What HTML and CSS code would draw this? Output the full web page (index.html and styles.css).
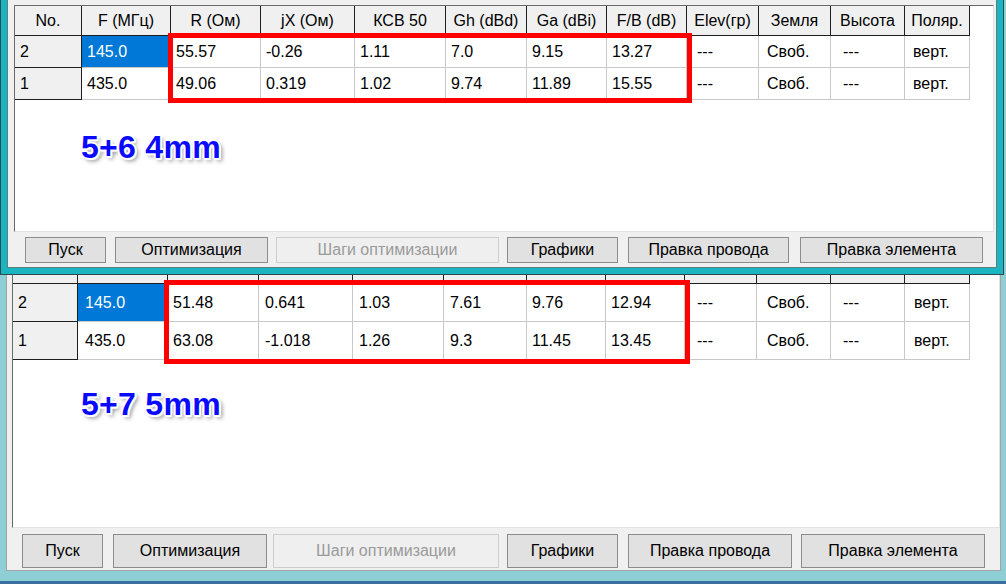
FILE: index.html
```html
<!DOCTYPE html>
<html lang="ru">
<head>
<meta charset="utf-8">
<title>MMANA</title>
<link rel="stylesheet" href="styles.css">
</head>
<body>
<div class="desk">
  <div class="win back">
    <div class="client">
      <div class="panel">
        <div class="row head">
          <div>No.</div><div>F (МГц)</div><div>R (Ом)</div><div>jX (Ом)</div><div>КСВ 50</div><div>Gh (dBd)</div><div>Ga (dBi)</div><div>F/B (dB)</div><div>Elev(гр)</div><div>Земля</div><div>Высота</div><div>Поляр.</div>
        </div>
        <div class="row">
          <div class="no">2</div><div class="sel">145.0</div><div>51.48</div><div>0.641</div><div>1.03</div><div>7.61</div><div>9.76</div><div>12.94</div><div>---</div><div>Своб.</div><div>---</div><div>верт.</div>
        </div>
        <div class="row">
          <div class="no">1</div><div>435.0</div><div>63.08</div><div>-1.018</div><div>1.26</div><div>9.3</div><div>11.45</div><div>13.45</div><div>---</div><div>Своб.</div><div>---</div><div>верт.</div>
        </div>
        <div class="label">5+7 5mm</div>
        <div class="mark"></div>
      </div>
      <div class="btns">
        <div class="btn b1">Пуск</div>
        <div class="btn b2">Оптимизация</div>
        <div class="btn b3 off">Шаги оптимизации</div>
        <div class="btn b4">Графики</div>
        <div class="btn b5">Правка провода</div>
        <div class="btn b6">Правка элемента</div>
      </div>
    </div>
  </div>

  <div class="win front">
    <div class="client">
      <div class="panel">
        <div class="row head">
          <div>No.</div><div>F (МГц)</div><div>R (Ом)</div><div>jX (Ом)</div><div>КСВ 50</div><div>Gh (dBd)</div><div>Ga (dBi)</div><div>F/B (dB)</div><div>Elev(гр)</div><div>Земля</div><div>Высота</div><div>Поляр.</div>
        </div>
        <div class="row">
          <div class="no">2</div><div class="sel">145.0</div><div>55.57</div><div>-0.26</div><div>1.11</div><div>7.0</div><div>9.15</div><div>13.27</div><div>---</div><div>Своб.</div><div>---</div><div>верт.</div>
        </div>
        <div class="row">
          <div class="no">1</div><div>435.0</div><div>49.06</div><div>0.319</div><div>1.02</div><div>9.74</div><div>11.89</div><div>15.55</div><div>---</div><div>Своб.</div><div>---</div><div>верт.</div>
        </div>
        <div class="label">5+6 4mm</div>
        <div class="mark"></div>
      </div>
      <div class="btns">
        <div class="btn b1">Пуск</div>
        <div class="btn b2">Оптимизация</div>
        <div class="btn b3 off">Шаги оптимизации</div>
        <div class="btn b4">Графики</div>
        <div class="btn b5">Правка провода</div>
        <div class="btn b6">Правка элемента</div>
      </div>
    </div>
  </div>
</div>
</body>
</html>
```

FILE: styles.css
```css
* { box-sizing: border-box; }
html, body { margin: 0; padding: 0; }
body {
  font-family: "Liberation Sans", Arial, sans-serif;
  font-size: 16px;
  color: #000;
  background: #3b6ea0;
}
.desk {
  position: relative;
  width: 1006px;
  height: 584px;
  overflow: hidden;
  background: #3b6ea0;
}

/* windows on the desktop */
.win { position: absolute; left: 0; display: flex; }
.client {
  flex: 1;
  display: flex;
  flex-direction: column;
  background: #f0f0f0;
}

.back {
  top: -40px;
  width: 1011px;
  height: 621px;
  border-style: solid;
  border-color: #8ecfd6;
  border-width: 0 10px 10px 6px;
}
.back .client { border: 1px solid #a3a3a3; }

.front {
  top: -10px;
  width: 1004px;
  height: 285px;
  border: 1px solid #2c4a50;
  background: #1bb5c2;
  padding: 6px;
}
.front .client { border: 1px solid #5f7c80; }

/* white grid panel */
.panel {
  position: relative;
  background: #fff;
  border-top: 1px solid #6a6a6a;
  border-left: 1px solid #6a6a6a;
  border-right: 1px solid #e3e3e3;
  border-bottom: 1px solid #e3e3e3;
}
.front .panel { margin: 7px 2px 0 6px; height: 227px; }
.back .panel { margin: auto 0 0 5px; height: 279px; }

/* rows */
.row { display: grid; }
.front .row { grid-template-columns: 67px 89px 90px 94px 91px 81px 80px 80px 72px 72px 74px 65px; height: 32px; }
.back .row { grid-template-columns: 65px 90px 91px 94px 91px 83px 79px 79px 72px 74px 74px 65px; height: 38px; }
.front .row.head { height: 30px; }
.back .row.head { height: 34px; }

.row > div {
  display: flex;
  align-items: center;
  padding-left: 5px;
  padding-top: 1px;
  white-space: nowrap;
  overflow: hidden;
  border-right: 1px solid #c9c9c9;
  border-bottom: 1px solid #c9c9c9;
}
.row.head > div {
  background: #f0f0f0;
  border-color: #1e1e1e;
  justify-content: center;
  padding: 0;
}
.row > .no { background: #f0f0f0; border-color: #1e1e1e; }
.row > .sel { background: #0078d7; color: #fff; }

.front .row:not(.head) > :nth-child(9) { padding-left: 10px; }
.front .row:not(.head) > :nth-child(10) { padding-left: 8px; }
.front .row:not(.head) > :nth-child(11) { padding-left: 12px; }
.front .row:not(.head) > :nth-child(12) { padding-left: 8px; }

.back .row:not(.head) > :nth-child(2) { padding-left: 7px; }
.back .row:not(.head) > :nth-child(4),
.back .row:not(.head) > :nth-child(5),
.back .row:not(.head) > :nth-child(6) { padding-left: 6px; }
.back .row:not(.head) > :nth-child(9) { padding-left: 12px; }
.back .row:not(.head) > :nth-child(10) { padding-left: 10px; }
.back .row:not(.head) > :nth-child(11) { padding-left: 12px; }
.back .row:not(.head) > :nth-child(12) { padding-left: 9px; }

/* annotation labels */
.label {
  width: max-content;
  font-family: "Liberation Sans", Arial, sans-serif;
  font-weight: bold;
  font-size: 32px;
  letter-spacing: 0.3px;
  line-height: 36px;
  color: #0a0aff;
  text-shadow:
    -1px -1px 0 #fff, 1px -1px 0 #fff, -1px 1px 0 #fff, 1px 1px 0 #fff,
    0 -2px 0 #fff, 0 2px 0 #fff, -2px 0 0 #fff, 2px 0 0 #fff,
    2px 2px 1px #fff,
    3px 3px 4px rgba(0, 0, 0, 0.5);
}
.front .label { margin: 29px 0 0 66px; }
.back .label { margin: 26px 0 0 68px; }

/* red highlight boxes */
.mark { position: absolute; border: 5px solid #ff0000; }
.front .mark { left: 153px; top: 27px; width: 524px; height: 70px; }
.back .mark { left: 151px; top: 30px; width: 526px; height: 84px; }

/* buttons */
.btns { display: flex; align-items: flex-start; }
.front .btns { height: 35px; padding-top: 5px; }
.back .btns { height: 42px; padding-top: 6px; }
.btn {
  display: flex;
  align-items: center;
  justify-content: center;
  background: #e1e1e1;
  border: 1px solid #8c8c8c;
  color: #000;
  white-space: nowrap;
}
.btn.off { background: #efefef; border-color: #cdcdcd; color: #9a9a9a; }
.front .btn { height: 26px; }
.back .btn { height: 34px; }

.front .b1 { margin-left: 17px; width: 81px; }
.front .b2 { margin-left: 9px; width: 153px; }
.front .b3 { margin-left: 8px; width: 223px; }
.front .b4 { margin-left: 8px; width: 111px; }
.front .b5 { margin-left: 10px; width: 161px; }
.front .b6 { margin-left: 11px; width: 183px; }

.back .b1 { margin-left: 15px; width: 81px; }
.back .b2 { margin-left: 10px; width: 154px; }
.back .b3 { margin-left: 6px; width: 226px; }
.back .b4 { margin-left: 8px; width: 111px; }
.back .b5 { margin-left: 10px; width: 164px; }
.back .b6 { margin-left: 9px; width: 184px; }
```
